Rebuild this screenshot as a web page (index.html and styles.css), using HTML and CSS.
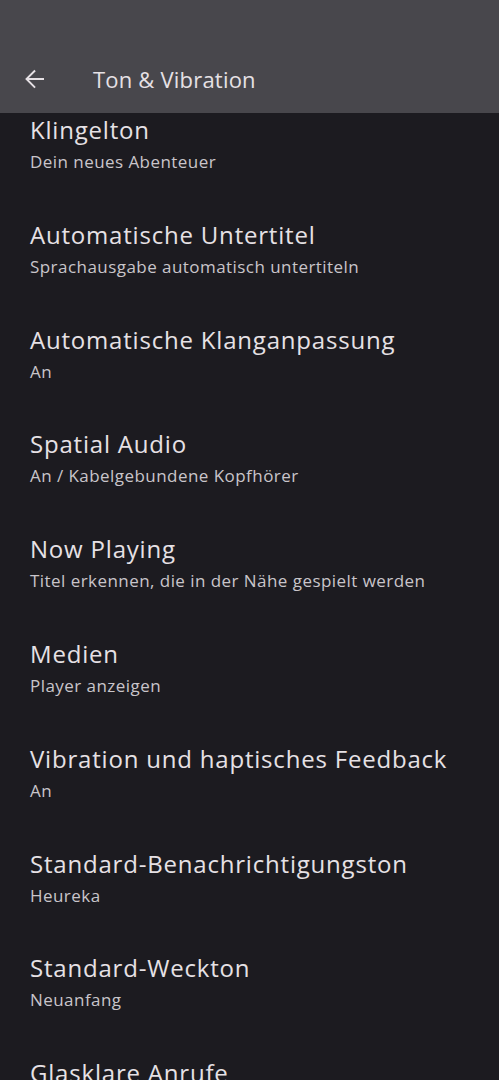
FILE: index.html
```html
<!DOCTYPE html>
<html lang="de">
<head>
    <meta charset="UTF-8" />
    <title>Ton &amp; Vibration</title>
    <link rel="stylesheet" href="styles.css">
</head>
<body>
<div class="topbar">
    <a class="back" href="#">
        <svg width="30" height="30" viewBox="0 0 24 24">
            <path d="M20 11.2H7.9l5.5-5.5L12.3 4.6 4.9 12l7.4 7.4 1.1-1.1-5.5-5.5H20z" fill="#e6e1e5"/>
        </svg>
    </a>
    <h1 class="title">Ton &amp; Vibration</h1>
</div>
<ul class="list">
    <li><p class="name">Klingelton</p><p class="sub">Dein neues Abenteuer</p></li>
    <li><p class="name">Automatische Untertitel</p><p class="sub">Sprachausgabe automatisch untertiteln</p></li>
    <li><p class="name">Automatische Klanganpassung</p><p class="sub">An</p></li>
    <li><p class="name">Spatial Audio</p><p class="sub">An / Kabelgebundene Kopfhörer</p></li>
    <li><p class="name">Now Playing</p><p class="sub">Titel erkennen, die in der Nähe gespielt werden</p></li>
    <li><p class="name">Medien</p><p class="sub">Player anzeigen</p></li>
    <li><p class="name">Vibration und haptisches Feedback</p><p class="sub">An</p></li>
    <li><p class="name">Standard-Benachrichtigungston</p><p class="sub">Heureka</p></li>
    <li><p class="name">Standard-Weckton</p><p class="sub">Neuanfang</p></li>
    <li><p class="name">Glasklare Anrufe</p><p class="sub">An</p></li>
</ul>
</body>
</html>
```

FILE: styles.css
```css
* {margin:0; padding:0;}
ul {list-style: none;}
html, body {
    height: 100%;
    overflow: hidden;
}
body {
    background-color: #1c1b20;
    font-family: "Open Sans", Roboto, sans-serif;
    color: #e6e1e5;
}
.topbar {
    position: fixed;
    left: 0;
    top: 0;
    right: 0;
    height: 113px;
    background-color: #48474c;
    display: flex;
    align-items: flex-end;
    padding-bottom: 18px;
    box-sizing: border-box;
    z-index: 2;
}
.back {
    display: flex;
    width: 48px;
    height: 32px;
    align-items: center;
    justify-content: center;
    margin-left: 10px;
}
.title {
    font-size: 22px;
    font-weight: 400;
    line-height: 32px;
    letter-spacing: 0.2px;
    margin-left: 35px;
    margin-top: -2px;
    color: #e6e1e5;
}
.list {
    padding-top: 92px;
}
.list li {
    padding: 22px 30px 22.8px;
}
.name {
    font-size: 24px;
    line-height: 32px;
    letter-spacing: 0.8px;
    color: #e6e1e5;
}
.sub {
    font-size: 17px;
    line-height: 24px;
    letter-spacing: 0.45px;
    margin-top: 4px;
    color: #c9c5ca;
}
```
